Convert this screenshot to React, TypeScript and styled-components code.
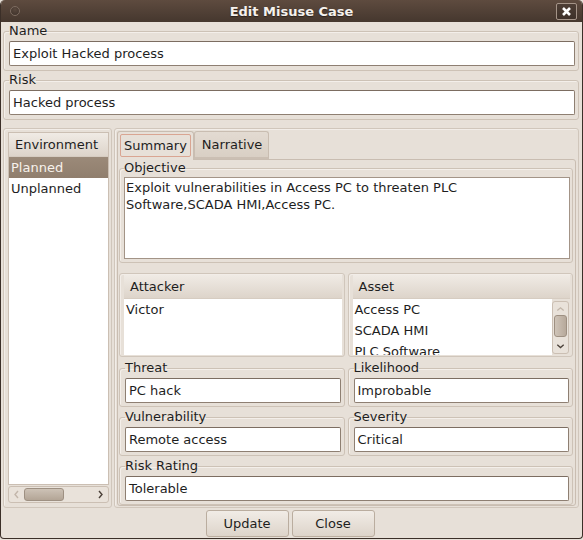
import styled, { createGlobalStyle } from "styled-components";

const GlobalStyle = createGlobalStyle`
  html, body {
    margin: 0;
    padding: 0;
    background: #e7e0d8;
  }
  * {
    box-sizing: border-box;
  }
`;

const FONT = `"DejaVu Sans", "Liberation Sans", sans-serif`;

const Window = styled.div`
  width: 583px;
  height: 539px;
  display: flex;
  flex-direction: column;
  background: #e7e0d8;
  border: 1px solid #3b2f28;
  border-top: none;
  border-radius: 5px 5px 4px 4px;
  overflow: hidden;
  font-family: ${FONT};
  font-size: 13px;
  color: #1e1e1e;
`;

const TitleBar = styled.div`
  height: 22px;
  flex: none;
  display: flex;
  align-items: center;
  justify-content: center;
  position: relative;
  background: linear-gradient(#5e4b3f, #45372e);
  color: #f5f1ed;
  font-weight: bold;
  font-size: 13px;
  text-shadow: 0 1px 1px #2a201b;
`;

const TitleDot = styled.div`
  position: absolute;
  left: 9px;
  top: 6px;
  width: 10px;
  height: 10px;
  border-radius: 50%;
  background: radial-gradient(circle at 50% 30%, #5a493e, #3c3029);
  border: 1px solid #7d6c60;
`;

const CloseBox = styled.div`
  position: absolute;
  right: 5px;
  top: 3px;
  width: 21px;
  height: 17px;
  border: 1px solid #a49488;
  border-radius: 2px;
  background: linear-gradient(#4d3e35, #3e3129);
  display: flex;
  align-items: center;
  justify-content: center;
`;

const Body = styled.div`
  flex: 1;
  display: flex;
  flex-direction: column;
  padding: 1px 3px 0 2px;
`;

const Group = styled.fieldset<{ $pad?: string }>`
  margin: 0;
  min-width: 0;
  padding: ${(p) => p.$pad ?? "0 3px 3px 5px"};
  border: 1px solid #cdc2b6;
  border-radius: 3px;
  box-shadow: inset 1px 1px 0 #f4efea;
`;

const Legend = styled.legend`
  padding: 0;
  margin: 0;
  line-height: 16px;
  font-size: 13px;
  color: #1e1e1e;
`;

const Entry = styled.div`
  height: 25px;
  margin-top: 2px;
  background: #ffffff;
  border: 1px solid #8e7f72;
  border-top-color: #7c6d61;
  border-radius: 2px;
  padding: 0 3px;
  display: flex;
  align-items: center;
  white-space: nowrap;
  overflow: hidden;
`;

const TextArea = styled.div`
  height: 82px;
  margin-top: 1px;
  background: #ffffff;
  border: 1px solid #a39487;
  padding: 1px 1px;
  line-height: 17px;
  white-space: pre-wrap;
`;

const Main = styled.div`
  display: flex;
  gap: 2px;
  margin-top: 8px;
  height: 380px;
`;

const Panel = styled.div`
  border: 1px solid #d0c6bb;
  border-radius: 3px;
  box-shadow: inset 1px 1px 0 #f2ede8;
`;

const EnvPanel = styled(Panel)`
  width: 109px;
  padding: 3px 2px 4px 4px;
  display: flex;
  flex-direction: column;
`;

const ListView = styled.div`
  flex: 1;
  display: flex;
  flex-direction: column;
  background: #ffffff;
  border: 1px solid #cbbfb3;
  overflow: hidden;
`;

const ListHeader = styled.div`
  height: 24px;
  flex: none;
  padding: 0 6px;
  display: flex;
  align-items: center;
  background: linear-gradient(#f0ebe5, #ddd4ca);
  border-bottom: 1px solid #d6ccc1;
  white-space: nowrap;
`;

const ListBody = styled.div`
  flex: 1;
  display: flex;
  min-height: 0;
`;

const Rows = styled.div`
  flex: 1;
  overflow: hidden;
`;

const Row = styled.div<{ $selected?: boolean }>`
  height: 21px;
  padding: 0 2px;
  display: flex;
  align-items: center;
  white-space: nowrap;
  background: ${(p) => (p.$selected ? "linear-gradient(#9b8a79, #907e6d)" : "transparent")};
  color: ${(p) => (p.$selected ? "#f7f2ec" : "#1e1e1e")};
`;

const HScroll = styled.div`
  height: 17px;
  margin: 1px 0 0 0;
  border: 1px solid #cbbfb3;
  border-radius: 3px;
  background: #e9e2da;
  display: flex;
  align-items: center;
  padding: 0 4px;
  gap: 4px;
`;

const HThumb = styled.div`
  width: 40px;
  height: 13px;
  border: 1px solid #9e9082;
  border-radius: 3px;
  background: linear-gradient(#cdc2b6, #b3a596);
`;

const VScroll = styled.div`
  width: 17px;
  margin: 2px 1px 1px 0;
  border: 1px solid #cbbfb3;
  border-radius: 3px;
  background: #e9e2da;
  display: flex;
  flex-direction: column;
  align-items: center;
  padding: 4px 0;
  gap: 3px;
`;

const VThumb = styled.div`
  width: 13px;
  height: 23px;
  border: 1px solid #9e9082;
  border-radius: 3px;
  background: linear-gradient(90deg, #cfc4b8, #b7a99b);
`;

const Spacer = styled.div`
  flex: 1;
`;

const TabPanel = styled(Panel)`
  flex: 1;
  padding: 1px 2px 1px 2px;
  display: flex;
  flex-direction: column;
`;

const TabBar = styled.div`
  display: flex;
  align-items: flex-end;
  height: 29px;
  flex: none;
`;

const ActiveTab = styled.div`
  height: 29px;
  padding: 2px 2px 3px 2px;
  border: 1px solid #c9bdb1;
  border-bottom: none;
  border-radius: 3px 3px 0 0;
  background: #e7e0d8;
  position: relative;
  top: 1px;
`;

const FocusBox = styled.div`
  height: 23px;
  padding: 0 3px;
  border: 1px solid #d9a592;
  border-radius: 2px;
  display: flex;
  align-items: center;
`;

const Tab = styled.div`
  height: 28px;
  padding: 0 6px 0 7px;
  border: 1px solid #c9bdb1;
  border-bottom: 2px solid #cbbfb3;
  border-radius: 3px 3px 0 0;
  background: linear-gradient(#e3dbd2, #d9cfc4);
  display: flex;
  align-items: center;
`;

const Pane = styled.div`
  flex: 1;
  border: 1px solid #c9bdb1;
  border-radius: 0 3px 3px 3px;
  padding: 0 2px 0 1px;
  display: flex;
  flex-direction: column;
  gap: 2px;
`;

const Pair = styled.div<{ $top?: number }>`
  display: grid;
  grid-template-columns: 1fr 1fr;
  gap: 3px;
  margin-top: ${(p) => p.$top ?? 0}px;
`;

const ListFrame = styled(Panel)`
  height: 84px;
  padding: 1px 2px 1px 4px;
  display: flex;
  flex-direction: column;
`;

const InnerList = styled.div`
  flex: 1;
  display: flex;
  flex-direction: column;
  background: #ffffff;
  min-height: 0;
`;

const Buttons = styled.div`
  display: flex;
  justify-content: center;
  gap: 3px;
  margin-top: 2px;
  padding-right: 2px;
`;

const Button = styled.div`
  width: 83px;
  height: 27px;
  border: 1px solid #baad9f;
  border-radius: 3px;
  background: linear-gradient(#f1ece6, #ddd4ca);
  display: flex;
  align-items: center;
  justify-content: center;
`;

function Chevron({ dir, color }: { dir: "left" | "right" | "up" | "down"; color: string }) {
  const paths = {
    left: "M5 1 L2 4.5 L5 8",
    right: "M2 1 L5 4.5 L2 8",
    up: "M1 5 L4.5 2 L8 5",
    down: "M1 2 L4.5 5 L8 2",
  };
  const w = dir === "left" || dir === "right" ? 7 : 9;
  const h = dir === "left" || dir === "right" ? 9 : 7;
  return (
    <svg width={w} height={h} viewBox={`0 0 ${w} ${h}`}>
      <path d={paths[dir]} fill="none" stroke={color} strokeWidth="1.4" />
    </svg>
  );
}

export default function App() {
  return (
    <>
      <GlobalStyle />
      <Window>
        <TitleBar>
          <TitleDot />
          Edit Misuse Case
          <CloseBox>
            <svg width="11" height="11" viewBox="0 0 11 11">
              <path d="M2 2 L9 9 M9 2 L2 9" stroke="#ffffff" strokeWidth="2.6" />
            </svg>
          </CloseBox>
        </TitleBar>
        <Body>
          <Group $pad="0 3px 4px 5px">
            <Legend>Name</Legend>
            <Entry>Exploit Hacked process</Entry>
          </Group>
          <Group $pad="0 3px 4px 5px" style={{ marginTop: 1 }}>
            <Legend>Risk</Legend>
            <Entry>Hacked process</Entry>
          </Group>
          <Main>
            <EnvPanel>
              <ListView>
                <ListHeader>Environment</ListHeader>
                <Rows>
                  <Row $selected>Planned</Row>
                  <Row>Unplanned</Row>
                </Rows>
              </ListView>
              <HScroll>
                <Chevron dir="left" color="#c2b6aa" />
                <HThumb />
                <Spacer />
                <Chevron dir="right" color="#4a4038" />
              </HScroll>
            </EnvPanel>
            <TabPanel>
              <TabBar>
                <ActiveTab>
                  <FocusBox>Summary</FocusBox>
                </ActiveTab>
                <Tab>Narrative</Tab>
              </TabBar>
              <Pane>
                <Group $pad="0 2px 3px 4px">
                  <Legend>Objective</Legend>
                  <TextArea>
                    {"Exploit vulnerabilities in Access PC to threaten PLC\nSoftware,SCADA HMI,Access PC."}
                  </TextArea>
                </Group>
                <Pair $top={8}>
                  <ListFrame>
                    <ListHeader>Attacker</ListHeader>
                    <InnerList>
                      <Row>Victor</Row>
                    </InnerList>
                  </ListFrame>
                  <ListFrame>
                    <ListHeader>Asset</ListHeader>
                    <ListBody>
                      <Rows style={{ background: "#fff" }}>
                        <Row>Access PC</Row>
                        <Row>SCADA HMI</Row>
                        <Row>PLC Software</Row>
                      </Rows>
                      <VScroll>
                        <Chevron dir="up" color="#c2b6aa" />
                        <VThumb />
                        <Spacer />
                        <Chevron dir="down" color="#4a4038" />
                      </VScroll>
                    </ListBody>
                  </ListFrame>
                </Pair>
                <Pair $top={1}>
                  <Group>
                    <Legend>Threat</Legend>
                    <Entry>PC hack</Entry>
                  </Group>
                  <Group>
                    <Legend>Likelihood</Legend>
                    <Entry>Improbable</Entry>
                  </Group>
                </Pair>
                <Pair>
                  <Group>
                    <Legend>Vulnerability</Legend>
                    <Entry>Remote access</Entry>
                  </Group>
                  <Group>
                    <Legend>Severity</Legend>
                    <Entry>Critical</Entry>
                  </Group>
                </Pair>
                <Group>
                  <Legend>Risk Rating</Legend>
                  <Entry>Tolerable</Entry>
                </Group>
              </Pane>
            </TabPanel>
          </Main>
          <Buttons>
            <Button>Update</Button>
            <Button>Close</Button>
          </Buttons>
        </Body>
      </Window>
    </>
  );
}
